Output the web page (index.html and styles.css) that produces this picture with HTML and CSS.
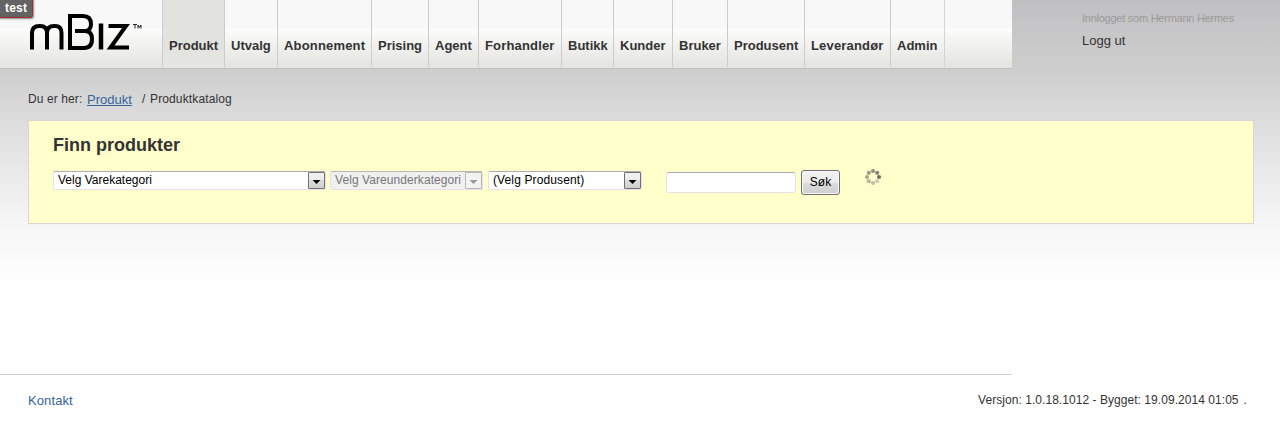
FILE: index.html
```
<!DOCTYPE html>
<html lang="no">
<head>
<meta charset="utf-8">
<title>mBiz - Produktkatalog</title>
<link rel="stylesheet" href="styles.css">
</head>
<body>
<div class="env-badge">test</div>
<div class="top">
  <header class="header">
    <svg class="logo" width="162" height="68" viewBox="0 0 162 68" role="img" aria-label="mBiz">
      <g fill="none" stroke="#000" stroke-width="4">
        <path d="M32 49.500V33Q32 26 39.500 26H40Q47 26 47 33V49.500M47 33Q47 26 54 26H55Q61.500 26 61.500 33V49.500"/>
        <path d="M75 31H86Q91 30 91 24Q91 16 83 16H70V48H84Q92 48 92 39Q92 31 85 31"/>
        <path d="M101 23.500V49.500" stroke-width="4.500"/>
        <path d="M108.500 26H126L110.500 47.500H129"/>
      </g>
      <path d="M133 24.500H137M135 24.500V28.500M138 28.500V25L139.500 27.500L141 25V28.500" fill="none" stroke="#111" stroke-width=".9"/>
    </svg>
    <nav class="nav">
      <a class="active">Produkt</a><a>Utvalg</a><a class="wide">Abonnement</a><a>Prising</a><a>Agent</a><a class="wide">Forhandler</a><a>Butikk</a><a>Kunder</a><a>Bruker</a><a>Produsent</a><a class="wide">Leverandør</a><a>Admin</a>
    </nav>
  </header>
  <div class="user">
    <div class="who">Innlogget som Hermann Hermes</div>
    <a class="logout">Logg ut</a>
  </div>
</div>
<div class="crumbs"><span class="here">Du er her:</span><a class="link">Produkt</a><span class="slash">/</span><span class="page">Produktkatalog</span></div>
<main class="panel">
  <h1>Finn produkter</h1>
  <div class="filters">
    <div class="select category"><span>Velg Varekategori</span><i class="arrow"></i></div>
    <div class="select subcategory disabled"><span>Velg Vareunderkategori</span><i class="arrow"></i></div>
    <div class="select producer"><span>(Velg Produsent)</span><i class="arrow"></i></div>
    <input class="query" type="text" aria-label="Søk">
    <button class="search">Søk</button>
    <svg class="spinner" width="18" height="18" viewBox="0 0 18 18">
      <circle cx="9" cy="3" r="2.100" fill="#8f8f83"/><circle cx="13.200" cy="4.800" r="2.100" fill="#84847a"/><circle cx="15" cy="9" r="2.100" fill="#6f6f68"/><circle cx="13.200" cy="13.200" r="2.100" fill="#cbcbae"/><circle cx="9" cy="15" r="2.100" fill="#c0c0a5"/><circle cx="4.800" cy="13.200" r="2.100" fill="#b6b69d"/><circle cx="3" cy="9" r="2.100" fill="#a9a994"/><circle cx="4.800" cy="4.800" r="2.100" fill="#9d9d8b"/>
    </svg>
  </div>
</main>
<footer class="footer">
  <a class="contact">Kontakt</a>
  <span class="version">Versjon: 1.0.18.1012 - Bygget: 19.09.2014 01:05<span class="dot">.</span></span>
</footer>
</body>
</html>
```
FILE: styles.css
```
* { box-sizing: border-box; }
body {
  margin: 0;
  height: 425px;
  overflow: hidden;
  font: 12px/16px "Liberation Sans", Arial, sans-serif;
  color: #333;
  background: #fff linear-gradient(#c0c0c2 0, #cecece 70px, #dedede 125px, #f5f5f5 220px, #fff 285px) no-repeat;
}
.env-badge {
  position: absolute;
  top: -3px;
  left: -3px;
  width: 36px;
  height: 21px;
  padding: 3px 0 0 7px;
  border: 1px solid #a3282c;
  border-radius: 3px;
  background: #636363;
  box-shadow: 1px 1px 2px #888;
  color: #fff;
  font-size: 12px;
  font-weight: bold;
  line-height: 15px;
  letter-spacing: .2px;
}
.top { display: flex; height: 69px; }
.header {
  display: flex;
  width: 1012px;
  height: 69px;
  border-bottom: 1px solid #bfbfbf;
  background: linear-gradient(#f8f8f8 0, #f8f8f8 28px, #fcfcfc 28px, #e4e4e0 67px);
}
.logo { flex: none; }
.nav {
  display: grid;
  grid-template-columns: 62px 53px 94px 57px 50px 83px 52px 59px 55px 77px 86px 54px;
  width: 783px;
  height: 67px;
  border-right: 1px solid #d4d4d4;
}
.nav a {
  padding: 38px 0 0 6px;
  border-left: 1px solid #ccc;
  font-size: 13px;
  font-weight: bold;
  white-space: nowrap;
}
.nav .wide { letter-spacing: .17px; }
.nav .active { background: linear-gradient(#e2e2de, #e2e2de 45px, #e6e6e2); }
.user { padding: 10px 0 0 70px; }
.who { font-size: 11px; color: #999; letter-spacing: -.25px; }
.logout { display: block; margin-top: 7px; font-size: 13px; }
.crumbs { display: flex; height: 51px; padding: 22px 0 0 28px; }
.here { width: 59px; letter-spacing: .1px; }
.crumbs .link { width: 55px; color: #369; font-size: 13px; line-height: 17px; text-decoration: underline; }
.slash { width: 8px; }
.page { letter-spacing: .13px; }
.panel {
  width: 1226px;
  height: 104px;
  margin-left: 28px;
  padding: 13px 24px 0;
  border: 1px solid #d6d6d4;
  background: #ffc;
}
h1 { margin: 0; font-size: 18px; line-height: 22px; }
.filters { display: flex; align-items: flex-start; margin-top: 12px; }
.select {
  display: flex;
  justify-content: space-between;
  height: 19px;
  margin: 3px 5px 0 0;
  border: 1px solid #e3e3e7;
  border-top-color: #abadb3;
  border-radius: 2px;
  background: #fff;
  color: #000;
  white-space: nowrap;
}
.select span { padding-left: 4px; }
.category { width: 273px; margin-right: 4px; }
.subcategory { width: 153px; }
.subcategory span { letter-spacing: .07px; }
.producer { width: 154px; margin-right: 24px; }
.producer span { letter-spacing: .12px; }
.arrow {
  flex: none;
  display: flex;
  justify-content: center;
  width: 17px;
  height: 17px;
  padding-top: 7px;
  border: 1px solid #707070;
  border-radius: 1px;
  background: linear-gradient(#f2f2f2, #ececec 50%, #dcdcdc 50%, #cfcfcf);
}
.arrow::before { content: ""; width: 8px; height: 4px; background: #000; clip-path: polygon(0 0, 100% 0, 50% 100%); }
.disabled { background: #f0f0f0; color: #777; border-top-color: #b8b8b8; }
.disabled .arrow { border-color: #b8b8b8; background: #f2f2f2; }
.disabled .arrow::before { background: #999; }
.query {
  width: 130px;
  height: 21px;
  margin: 4px 5px 0 0;
  border: 1px solid #e3e3e7;
  border-top-color: #abadb3;
  border-radius: 3px;
  background: #fff;
}
.search {
  width: 39px;
  height: 25px;
  margin: 2px 25px 0 0;
  padding: 0 0 1px;
  border: 1px solid #707070;
  border-radius: 3px;
  background: linear-gradient(#f2f2f2, #ebebeb 50%, #ddd 50%, #cfcfcf);
  box-shadow: inset 0 0 0 1px #f8f8f8;
  color: #000;
  font: 12px "Liberation Sans", Arial, sans-serif;
}
.spinner { flex: none; margin-left: -1px; }
.footer {
  display: flex;
  justify-content: space-between;
  width: 1247px;
  margin-top: 150px;
  padding: 18px 0 0 28px;
  background: linear-gradient(#d0d0d0, #d0d0d0) 0 0 / 1012px 1px no-repeat;
}
.contact { padding-top: 1px; color: #369; font-size: 13px; letter-spacing: .1px; }
.version { letter-spacing: .05px; }
.dot { margin-left: 5px; }
```
